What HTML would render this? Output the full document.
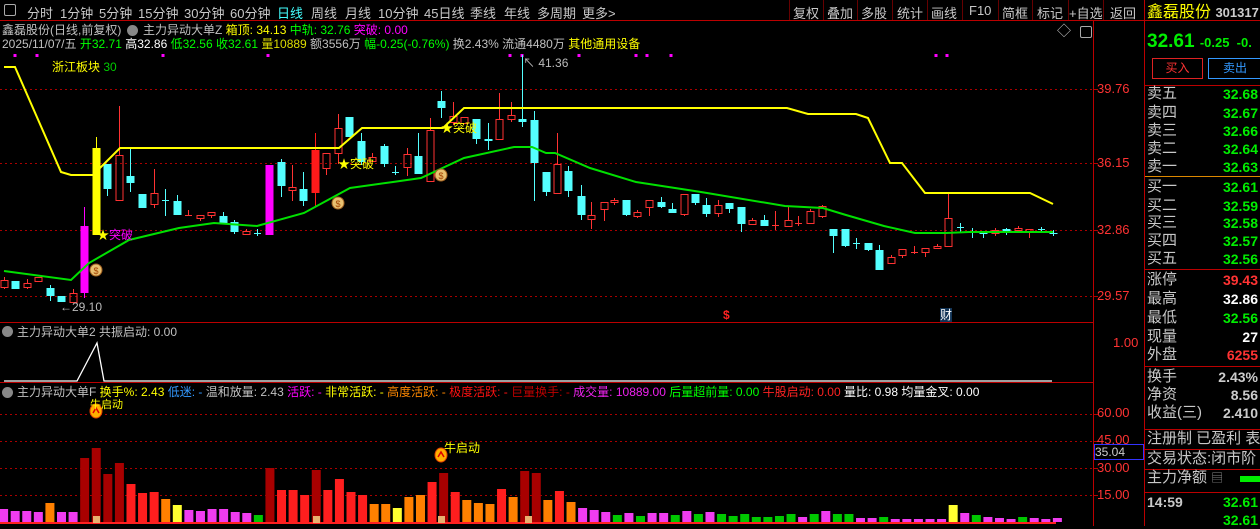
<!DOCTYPE html>
<html><head><meta charset="utf-8">
<style>
body{margin:0;background:#000;width:1260px;height:526px;overflow:hidden;position:relative;font-family:"Liberation Sans","Noto Sans CJK SC",sans-serif;font-size:12px;color:#c0c0c0}
.t{position:absolute;white-space:nowrap;line-height:14px}
svg{position:absolute;left:0;top:0}
.tb{position:absolute;top:3px;font-size:13px;color:#c8c8c8;white-space:nowrap}
.r{position:absolute;left:1147px;font-size:15px;color:#c8c8c8;white-space:nowrap;line-height:18px}
.v{position:absolute;right:2px;font-size:14px;font-weight:bold;white-space:nowrap;line-height:18px}
</style></head><body>
<svg id="s" width="1260" height="526" xmlns="http://www.w3.org/2000/svg"></svg>

<div class="t" style="left:4px;top:4px;width:10px;height:10px;border:1px solid #aaa;border-radius:2px"></div>
<div class="tb" style="left:27px">分时</div>
<div class="tb" style="left:60px">1分钟</div>
<div class="tb" style="left:99px">5分钟</div>
<div class="tb" style="left:138px">15分钟</div>
<div class="tb" style="left:184px">30分钟</div>
<div class="tb" style="left:230px">60分钟</div>
<div class="tb" style="left:277px;color:#4ff">日线</div>
<div class="tb" style="left:311px">周线</div>
<div class="tb" style="left:345px">月线</div>
<div class="tb" style="left:378px">10分钟</div>
<div class="tb" style="left:424px">45日线</div>
<div class="tb" style="left:470px">季线</div>
<div class="tb" style="left:504px">年线</div>
<div class="tb" style="left:537px">多周期</div>
<div class="tb" style="left:582px">更多&gt;</div>
<div class="tb" style="left:793px">复权</div>
<div class="tb" style="left:827px">叠加</div>
<div class="tb" style="left:861px">多股</div>
<div class="tb" style="left:897px">统计</div>
<div class="tb" style="left:931px">画线</div>
<div class="tb" style="left:969px">F10</div>
<div class="tb" style="left:1002px">简框</div>
<div class="tb" style="left:1037px">标记</div>
<div class="tb" style="left:1069px">+自选</div>
<div class="tb" style="left:1110px">返回</div>

<div class="t" style="left:2px;top:23px">鑫磊股份(日线,前复权)</div>
<div class="t" style="left:127px;top:25px;width:11px;height:11px;border-radius:50%;background:#888"></div>
<div class="t" style="left:143px;top:23px">主力异动大单Z <span style="color:#ff0">箱顶: 34.13</span> <span style="color:#0f0">中轨: 32.76</span> <span style="color:#f0f">突破: 0.00</span></div>
<div class="t" style="left:2px;top:37px">2025/11/07/五 <span style="color:#0f0">开32.71</span> <span style="color:#fff">高32.86</span> <span style="color:#0f0">低32.56</span> <span style="color:#0f0">收32.61</span> <span style="color:#dd0">量10889</span> 额3556万 <span style="color:#0f0">幅-0.25(-0.76%)</span> 换2.43% 流通4480万 <span style="color:#ff0">其他通用设备</span></div>
<div class="t" style="left:1057px;top:24px;font-size:14px;color:#bbb">◇</div>
<div class="t" style="left:1080px;top:26px;width:10px;height:10px;border:1px solid #aaa;border-radius:2px"></div>

<div class="t" style="left:52px;top:60px;color:#ff0">浙江板块 <span style="color:#0c0">30</span></div>
<div class="t" style="left:60px;top:300px;color:#bbb">←29.10</div>
<div class="t" style="left:523px;top:56px;color:#bbb">↖ 41.36</div>
<div class="t" style="left:97px;top:228px;color:#ff0">★<span style="color:#f0f">突破</span></div>
<div class="t" style="left:338px;top:157px;color:#ff0">★突破</div>
<div class="t" style="left:441px;top:121px;color:#ff0">★突破</div>
<div class="t" style="left:723px;top:308px;color:#f22;font-weight:bold">$</div>
<div class="t" style="left:940px;top:308px;color:#fff;background:#135">财</div>

<div class="t" style="left:1097px;top:82px;color:#f33;font-size:13px">39.76</div>
<div class="t" style="left:1097px;top:156px;color:#f33;font-size:13px">36.15</div>
<div class="t" style="left:1097px;top:223px;color:#f33;font-size:13px">32.86</div>
<div class="t" style="left:1097px;top:289px;color:#f33;font-size:13px">29.57</div>
<div class="t" style="left:1113px;top:336px;color:#f33;font-size:13px">1.00</div>
<div class="t" style="left:1097px;top:406px;color:#f33;font-size:13px">60.00</div>
<div class="t" style="left:1097px;top:433px;color:#f33;font-size:13px">45.00</div>
<div class="t" style="left:1094px;top:444px;width:48px;height:14px;background:#000;border:1px solid #33f;color:#ccc;font-size:12px;line-height:14px">35.04</div>
<div class="t" style="left:1097px;top:461px;color:#f33;font-size:13px">30.00</div>
<div class="t" style="left:1097px;top:488px;color:#f33;font-size:13px">15.00</div>

<div class="t" style="left:2px;top:326px;width:11px;height:11px;border-radius:50%;background:#888"></div>
<div class="t" style="left:17px;top:325px">主力异动大单2 共振启动: 0.00</div>
<div class="t" style="left:2px;top:387px;width:11px;height:11px;border-radius:50%;background:#888"></div>
<div class="t" style="left:17px;top:385px">主力异动大单F <span style="color:#ff0">换手%: 2.43</span> <span style="color:#39f">低迷: -</span> 温和放量: 2.43 <span style="color:#f0f">活跃: -</span> <span style="color:#ff0">非常活跃: -</span> <span style="color:#f80">高度活跃: -</span> <span style="color:#f11">极度活跃: -</span> <span style="color:#b00">巨量换手: -</span> <span style="color:#e2e">成交量: 10889.00</span> <span style="color:#0f0">后量超前量: 0.00</span> <span style="color:#f22">牛股启动: 0.00</span> <span style="color:#fff">量比: 0.98 均量金叉: 0.00</span></div>
<div class="t" style="left:90px;top:398px;color:#ff0;font-size:11px">牛启动</div>
<div class="t" style="left:444px;top:441px;color:#ff0">牛启动</div>

<div class="t" style="left:1147px;top:4px;font-size:16px;color:#ff0;line-height:18px">鑫磊股份 <span style="color:#ccc;font-size:13px;font-weight:bold">301317</span></div>
<div class="t" style="left:1147px;top:31px;font-size:19px;color:#0e0;font-weight:bold;line-height:22px">32.61 <span style="font-size:13px">-0.25 &nbsp;-0.</span></div>
<div class="t" style="left:1152px;top:58px;width:49px;height:19px;border:1px solid #d22;color:#f33;text-align:center;line-height:19px">买入</div>
<div class="t" style="left:1208px;top:58px;width:52px;height:19px;border:1px solid #39f;color:#39f;text-align:center;line-height:19px">卖出</div>
<div id="rp"></div>

<script>
const s=document.getElementById('s');let h='';
const L=(x1,y1,x2,y2,c,w,d)=>h+=`<line x1="${x1}" y1="${y1}" x2="${x2}" y2="${y2}" stroke="${c}" stroke-width="${w||1}"${d?` stroke-dasharray="${d}"`:''}/>`;
const R=(x,y,w,hh,f,st)=>h+=`<rect x="${x}" y="${y}" width="${w}" height="${hh}" fill="${f}"${st?` stroke="${st}"`:''}/>`;
L(0,20.5,1260,20.5,'#b00');L(1093.5,21,1093.5,526,'#b00');L(1144.5,0,1144.5,526,'#b00');
L(0,322.5,1093,322.5,'#b00');L(0,382.5,1093,382.5,'#b00');
[789,823,857,892,927,962,998,1032,1068,1103].forEach(x=>L(x+.5,0,x+.5,20,'#600'));
[89,163,230,296,414,441,468,495].forEach(y=>L(0,y+.5,1093,y+.5,'#a00',1,'2 3'));
[89,163,230,296,414,441,468,495].forEach(y=>L(1093,y+.5,1098,y+.5,'#b00'));
[15,37,163,268,510,522,579,636,647,671,936,947].forEach(x=>R(x-1.5,54,3,3,'#f0f'));
const C=[[4,280,287,277,289,'r'],[15,281,289,281,289,'c'],[27,283,287,279,289,'r'],[38,277,281,277,281,'r'],[50,288,296,285,301,'c'],[61,296,302,296,302,'c'],[73,293,302,289,302,'r'],[84,226,293,207,298,'m'],[96,148,235,137,235,'y'],[107,164,189,164,196,'c'],[119,155,200,106,200,'r'],[130,176,183,148,192,'c'],[142,194,208,194,208,'c'],[154,193,204,169,208,'r'],[165,200,200,189,216,'x'],[177,201,215,195,215,'c'],[188,215,215,210,215,'d'],[200,215,218,215,221,'r'],[211,212,215,212,218,'r'],[223,216,223,212,223,'c'],[234,222,232,220,234,'c'],[246,231,234,229,235,'r'],[257,233,233,229,236,'x'],[269,165,235,165,235,'m'],[281,162,186,159,197,'c'],[292,187,190,165,201,'r'],[303,189,201,172,206,'c'],[315,150,193,133,207,'R'],[326,153,168,153,175,'r'],[338,128,153,114,164,'r'],[349,117,137,117,137,'c'],[361,141,162,133,165,'c'],[372,157,161,153,161,'r'],[384,146,164,144,167,'c'],[395,172,172,166,175,'x'],[407,154,167,148,176,'r'],[418,156,174,133,174,'c'],[430,130,181,118,182,'r'],[441,101,108,91,118,'c'],[453,116,122,102,125,'r'],[464,117,123,117,123,'r'],[476,119,139,119,144,'c'],[488,139,141,123,150,'c'],[499,119,139,93,139,'r'],[511,115,119,102,122,'r'],[522,119,122,55,127,'c'],[534,120,163,111,201,'c'],[546,172,192,172,196,'c'],[557,164,193,133,193,'r'],[568,171,191,166,197,'c'],[581,196,215,185,220,'c'],[591,215,219,202,229,'r'],[604,202,209,202,221,'r'],[614,200,202,198,205,'r'],[626,200,215,200,216,'c'],[637,212,216,210,218,'r'],[649,200,207,200,216,'r'],[661,202,207,197,208,'c'],[672,209,213,203,213,'c'],[684,194,214,194,216,'r'],[695,194,203,194,205,'c'],[706,205,214,198,217,'c'],[718,205,213,200,217,'r'],[729,203,209,203,213,'c'],[741,207,224,207,232,'c'],[752,220,224,218,224,'r'],[764,220,226,215,226,'c'],[775,225,225,211,230,'d'],[788,220,226,207,226,'r'],[798,223,223,216,226,'d'],[810,211,223,209,223,'r'],[822,206,216,205,218,'r'],[833,229,236,229,253,'c'],[845,229,246,229,247,'c'],[856,243,243,238,249,'x'],[868,243,250,243,251,'c'],[879,250,270,245,270,'c'],[891,257,263,255,263,'r'],[902,249,255,249,258,'r'],[914,252,252,246,254,'d'],[925,248,252,248,257,'r'],[937,246,248,244,249,'r'],[948,218,246,194,246,'r'],[960,227,227,223,233,'x'],[972,232,232,228,238,'x'],[983,233,234,232,238,'c'],[995,230,233,228,236,'r'],[1006,229,232,228,235,'c'],[1018,228,230,226,233,'r'],[1029,229,232,229,238,'r'],[1041,229,229,227,233,'x'],[1053,233,234,230,236,'c']];
const col={r:'#ff3232',R:'#ff1a1a',c:'#54ffff',m:'#ff00ff',y:'#ffff00',x:'#54ffff',d:'#ff3232'};
C.forEach(([x,t,b,wt,wb,k])=>{const c=col[k];
 if(k=='r'){L(x+.5,wt,x+.5,t,c);L(x+.5,b,x+.5,wb,c);R(x-3,t+.5,7,Math.max(b-t,1),'none',c);}
 else if(k=='x'||k=='d'){L(x+.5,wt,x+.5,wb,c);L(x-3,t+.5,x+4,t+.5,c);}
 else{L(x+.5,wt,x+.5,wb,c);R(x-3.5,t,8,Math.max(b-t,1),c);}
});
const P=(pts,c,w)=>h+=`<polyline points="${pts}" fill="none" stroke="${c}" stroke-width="${w||2}"/>`;
P('4,67 15,67 61,172 71,175 93,175 120,148 339,148 362,128 443,128 464,108 787,108 808,114 856,114 868,118 890,163 902,163 925,193 1030,193 1053,204','#ffff00');
P('4,271 71,280 89,263 129,240 179,228 214,223 257,226 304,213 350,188 393,182 421,178 464,158 514,147 532,147 546,153 555,153 590,168 636,182 701,192 785,206 823,208 846,215 884,226 915,233 946,233 969,232 1053,232','#00e000');
[[96,270],[338,203],[441,175]].forEach(([x,y])=>{h+=`<circle cx="${x}" cy="${y}" r="6" fill="#e8c070" stroke="#a06020"/><text x="${x}" y="${y+4}" font-size="9" text-anchor="middle" fill="#a04000" font-family="Liberation Sans">$</text>`});
P('4,381 77,381 97,343 104,381 1052,381','#ffffff',1.3);
const V=[[387,'m'],[393,'m'],[393,'m'],[396,'m'],[369,'o'],[396,'m'],[396,'m'],[234,'D'],[204,'D'],[282,'D'],[249,'D'],[312,'r'],[339,'r'],[336,'r'],[357,'o'],[375,'y'],[390,'m'],[393,'m'],[387,'m'],[387,'m'],[396,'m'],[399,'m'],[405,'g'],[264,'D'],[330,'r'],[330,'r'],[345,'r'],[270,'D'],[330,'r'],[297,'r'],[336,'r'],[345,'r'],[372,'o'],[372,'o'],[384,'y'],[351,'o'],[345,'o'],[306,'r'],[279,'D'],[336,'r'],[360,'o'],[369,'o'],[372,'o'],[327,'r'],[351,'o'],[273,'D'],[279,'D'],[360,'o'],[333,'r'],[366,'o'],[384,'m'],[390,'m'],[396,'m'],[405,'g'],[399,'m'],[408,'g'],[399,'m'],[399,'m'],[405,'g'],[393,'m'],[402,'g'],[396,'m'],[402,'g'],[408,'g'],[402,'g'],[411,'g'],[411,'g'],[408,'g'],[402,'g'],[411,'m'],[402,'g'],[393,'m'],[402,'g'],[402,'g'],[414,'m'],[414,'m'],[411,'g'],[417,'m'],[417,'m'],[417,'m'],[417,'m'],[417,'m'],[375,'y'],[399,'m'],[405,'g'],[411,'m'],[414,'m'],[417,'m'],[411,'g'],[414,'m'],[417,'m'],[414,'m']];
const vc={m:'#f03cf0',o:'#ff8000',D:'#a80000',r:'#ff1e1e',y:'#ffff30',g:'#00c800'};
V.forEach(([zy,k],i)=>{const x=3.6+i*11.58,y=380+zy/3;R(x-4.5,y,9,522-y,vc[k]);});
L(0,523,1056,523,'#ff2020',2);
[96,316,441,528].forEach(x=>R(x-3,516,7,7,'#e8b070'));
[[96,411],[441,455]].forEach(([x,y])=>{h+=`<ellipse cx="${x}" cy="${y}" rx="6" ry="7" fill="#ffb000" stroke="#e04000"/><path d="M${x-3} ${y+2} L${x} ${y-3} L${x+3} ${y+2}" stroke="#d00" fill="none" stroke-width="1.5"/>`});
[[176,'#d80'],[269,'#b00'],[366,'#b00'],[429,'#b00'],[449,'#b00'],[469,'#b00'],[492,'#b00'],[85,'#b00']].forEach(([y,c])=>L(1145,y+.5,1260,y+.5,c));
R(1240,476,20,6,'#0e0');
s.innerHTML=h;
const rows=[['卖五',94,'32.68','#0e0'],['卖四',113,'32.67','#0e0'],['卖三',131,'32.66','#0e0'],['卖二',149,'32.64','#0e0'],['卖一',167,'32.63','#0e0'],['买一',187,'32.61','#0e0'],['买二',206,'32.59','#0e0'],['买三',223,'32.58','#0e0'],['买四',241,'32.57','#0e0'],['买五',259,'32.56','#0e0'],['涨停',280,'39.43','#f33'],['最高',299,'32.86','#fff'],['最低',318,'32.56','#0e0'],['现量',337,'27','#fff'],['外盘',355,'6255','#f33'],['换手',377,'2.43%','#ccc'],['净资',395,'8.56','#ccc'],['收益(三)',413,'2.410','#ccc']];
let r='';rows.forEach(([a,y,v,c])=>{r+=`<div class="r" style="top:${y-9}px">${a}</div><div class="v" style="top:${y-9}px;color:${c}">${v}</div>`});
r+=`<div class="r" style="top:430px">注册制 已盈利 表</div><div class="r" style="top:450px">交易状态:闭市阶</div><div class="r" style="top:469px">主力净额 <span style="font-size:12px;color:#888">▤</span></div><div class="r" style="top:493px;font-weight:bold;font-size:14px">14:59</div><div class="v" style="top:493px;color:#0e0">32.61</div><div class="v" style="top:511px;color:#0e0">32.61</div>`;
document.getElementById('rp').innerHTML=r;
</script>
</body></html>
